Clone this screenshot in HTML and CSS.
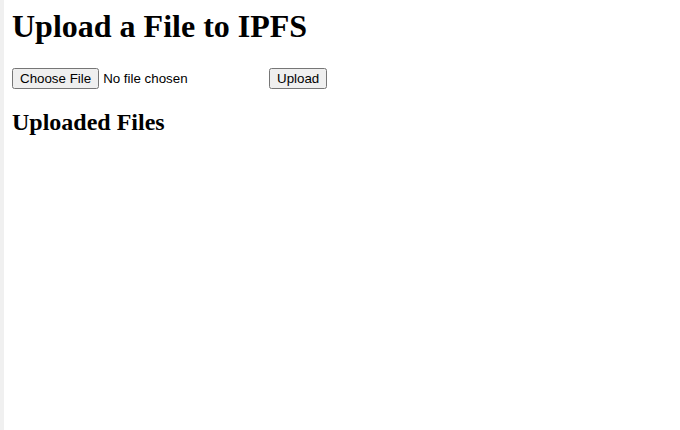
FILE: index.html
```html
<!DOCTYPE html>
<html lang="en">
<head>
<meta charset="utf-8">
<title>Upload a File to IPFS</title>
<link rel="stylesheet" href="styles.css">
</head>
<body>
<div class="app">
  <h1 class="title">Upload a File to IPFS</h1>
  <form class="upload-form">
    <input type="file" class="file-input">
    <button type="button" class="upload-btn">Upload</button>
  </form>
  <h2 class="section-title">Uploaded Files</h2>
  <ul class="file-list"></ul>
</div>
</body>
</html>
```
FILE: styles.css
```css
html {
  border-left: 4px solid #f0f0f0;
  min-height: 100%;
  background: #fff;
}
body {
  margin: 8px;
  font-family: "Liberation Serif", "Times New Roman", serif;
  color: #000;
}
.title {
  font-size: 2em;
  font-weight: bold;
  margin: 0 0 23.44px;
}
.upload-form {
  margin: 0;
}
.file-input,
.upload-btn {
  font-family: "Liberation Sans", Arial, sans-serif;
  font-size: 13.333px;
}
.section-title {
  font-size: 1.5em;
  margin: 19.92px 0;
}
.file-list {
  margin: 0;
  padding: 0;
}
```
